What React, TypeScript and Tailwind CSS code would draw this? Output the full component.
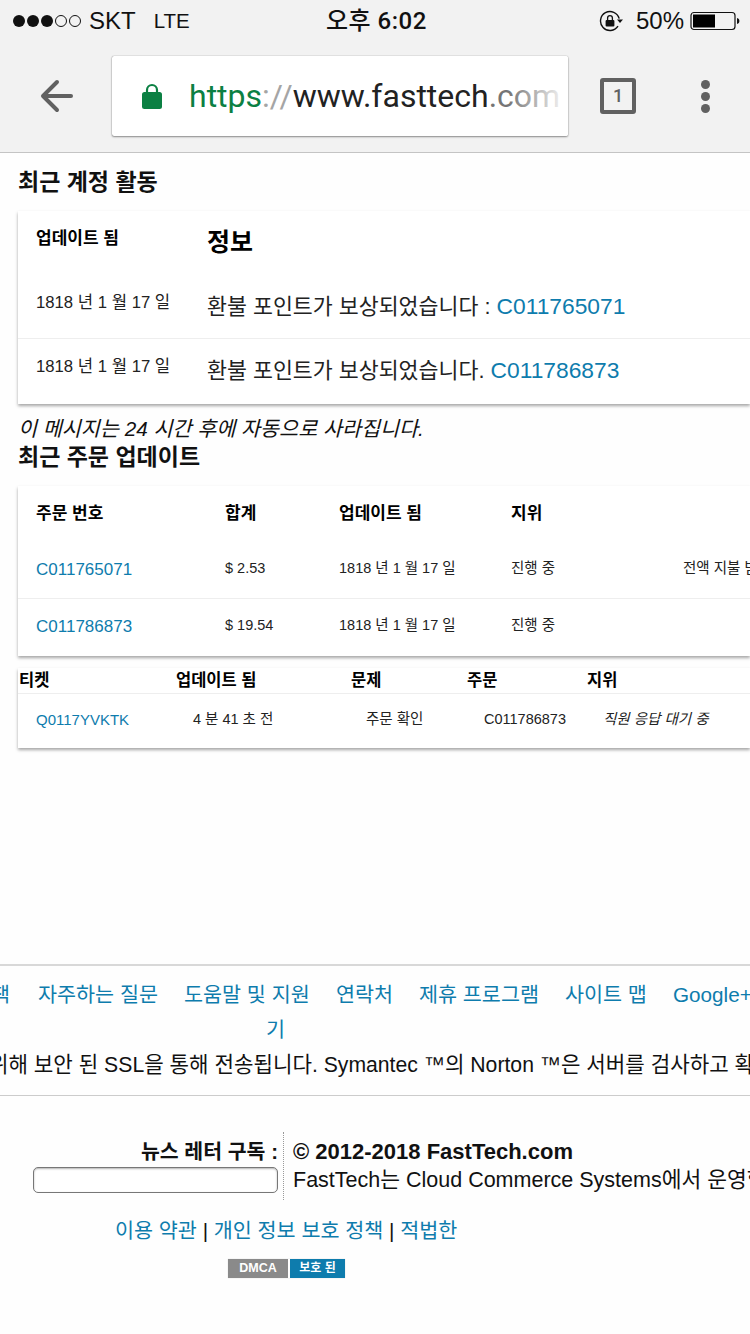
import React from 'react';

const KR = "font-['Liberation_Sans','Noto_Sans_CJK_KR',sans-serif]";
const link = 'text-[#0e7cad]';

function ArrowBack() {
  return (
    <svg width="34" height="34" viewBox="0 0 34 34" fill="none" stroke="#616161" strokeWidth="4" strokeLinecap="round" strokeLinejoin="round">
      <path d="M31 17H4" />
      <path d="M17 3 3 17l14 14" />
    </svg>
  );
}

function Lock() {
  return (
    <svg width="20" height="26" viewBox="0 0 20 26">
      <path d="M5 10V7a5 5 0 0 1 10 0v3" fill="none" stroke="#0b8043" strokeWidth="2.2" />
      <rect x="0" y="9" width="20" height="17" rx="2.5" fill="#0b8043" />
    </svg>
  );
}

function RotationLock() {
  return (
    <svg width="26" height="22" viewBox="0 0 26 22" fill="none">
      <path d="M20.2 8.6A9.5 9.5 0 1 0 19 16.2" stroke="#111" strokeWidth="1.4" />
      <path d="M18 9.5h6l-3 3.6z" fill="#111" />
      <rect x="6.6" y="10" width="8.8" height="6.5" rx="1" fill="#111" />
      <path d="M8.6 10V8a2.4 2.4 0 0 1 4.8 0v2" stroke="#111" strokeWidth="1.3" />
    </svg>
  );
}

function Battery() {
  return (
    <svg width="50" height="20" viewBox="0 0 50 20" fill="none">
      <rect x="1" y="1.5" width="44" height="17" rx="3" stroke="#111" strokeWidth="1.2" />
      <rect x="3" y="3.5" width="22" height="13" fill="#000" />
      <path d="M47 7c1.6.3 2.4 1.5 2.4 3s-.8 2.7-2.4 3z" fill="#111" />
    </svg>
  );
}

function StatusBar() {
  return (
    <div className="relative flex h-[42px] items-center justify-between pl-[13px] pr-[10px] text-[#111]">
      <div className="flex items-center text-[24px] leading-none">
        <div className="flex items-center gap-[2px]">
          {[0, 1, 2].map((i) => <span key={i} className="h-[12px] w-[12px] rounded-full bg-[#111]" />)}
          {[0, 1].map((i) => <span key={i} className="h-[12px] w-[12px] rounded-full border border-[#111]" />)}
        </div>
        <span className="ml-[8px]">SKT</span>
        <span className="ml-[18px] text-[20.5px]">LTE</span>
      </div>
      <div className="absolute left-[326px] top-[7px] font-['Roboto','Noto_Sans_CJK_KR',sans-serif] text-[24px] font-medium leading-[28px] tracking-[0.5px]">오후 6:02</div>
      <div className="flex items-center text-[24px] leading-none">
        <RotationLock />
        <span className="ml-[11px]">50%</span>
        <span className="ml-[6px]"><Battery /></span>
      </div>
    </div>
  );
}

function Toolbar() {
  return (
    <div className="flex h-[111px] items-start border-b border-[#c4c4c4]">
      <div className="ml-[40px] mt-[37px]"><ArrowBack /></div>
      <div className="relative ml-[38px] mt-[14px] flex h-[80px] w-[456px] items-center overflow-hidden rounded-[2px] bg-white pl-[30px] shadow-[0_1px_2px_rgba(0,0,0,0.4),0_0_1px_rgba(0,0,0,0.5)]">
        <Lock />
        <div className="ml-[27px] whitespace-nowrap font-['Roboto',sans-serif] text-[32px] leading-none text-[#222]">
          <span className="text-[#0b8043]">https</span>
          <span className="text-[#a5a5a5]">://</span>
          www.fasttech
          <span className="text-[#757575]">.com</span>
        </div>
        <div className="absolute right-0 top-0 h-full w-[60px] bg-gradient-to-r from-white/0 to-white" />
      </div>
      <div className="ml-[32px] mt-[36px] flex h-[36px] w-[36px] items-center justify-center rounded-[3px] border-[4px] border-[#616161] font-['Roboto',sans-serif] text-[18px] font-medium leading-none text-[#616161]">1</div>
      <div className="ml-[65px] mt-[38px] flex flex-col gap-[3px]">
        {[0, 1, 2].map((i) => <span key={i} className="h-[9px] w-[9px] rounded-full bg-[#616161]" />)}
      </div>
    </div>
  );
}

function Activity() {
  const rows = [
    ['환불 포인트가 보상되었습니다 : ', 'C011765071'],
    ['환불 포인트가 보상되었습니다. ', 'C011786873'],
  ];
  return (
    <section>
      <h2 className="ml-[18px] mt-[15px] text-[23px] font-bold leading-[28px] text-[#111]">최근 계정 활동</h2>
      <div className="ml-[18px] mt-[15px] h-[193px] bg-white shadow-[0_2px_3px_rgba(0,0,0,0.35)]">
        <div className="flex h-[67px]">
          <div className="ml-[18px] w-[171px] pt-[17px] text-[17px] font-bold leading-[22px]">업데이트 됨</div>
          <div className="pt-[16px] text-[25px] font-bold leading-[30px]">정보</div>
        </div>
        {rows.map(([text, id], i) => (
          <div key={id} className={i === 0 ? 'flex h-[60px] items-center' : 'flex h-[65px] items-center border-t border-[#eee]'}>
            <div className={i === 0 ? 'ml-[18px] w-[171px] pb-[10px] text-[16.7px] leading-[20px] text-[#222]' : 'ml-[18px] w-[171px] pb-[8px] text-[16.7px] leading-[20px] text-[#222]'}>1818 년 1 월 17 일</div>
            <div className={i === 0 ? 'whitespace-pre pb-[4px] text-[21.7px] leading-[28px] text-[#222]' : 'whitespace-pre pb-[2px] text-[21.7px] leading-[28px] text-[#222]'}>{text}<span className={`text-[22.8px] ${link}`}>{id}</span></div>
          </div>
        ))}
      </div>
    </section>
  );
}

function OrderRow({ id, total, note, border }: { id: string; total: string; note?: string; border?: boolean }) {
  return (
    <div className={border ? 'flex h-[57px] items-center whitespace-nowrap border-t border-[#eee]' : 'flex h-[56px] items-center whitespace-nowrap'}>
      <div className={`ml-[18px] w-[189px] shrink-0 text-[17px] ${link}`}>{id}</div>
      <div className="w-[114px] shrink-0 pb-[3px] text-[14.5px] text-[#222]">{total}</div>
      <div className="w-[172px] shrink-0 pb-[3px] text-[14.5px] text-[#222]">1818 년 1 월 17 일</div>
      <div className="w-[172px] shrink-0 pb-[3px] text-[14.5px] text-[#222]">진행 중</div>
      {note && <div className="shrink-0 pb-[3px] text-[14.5px] text-[#222]">{note}</div>}
    </div>
  );
}

function Orders() {
  return (
    <section>
      <h2 className="ml-[18px] mt-[1px] text-[23px] font-bold leading-[28px] text-[#111]">최근 주문 업데이트</h2>
      <div className="ml-[18px] mt-[15px] h-[170px] overflow-hidden bg-white shadow-[0_2px_3px_rgba(0,0,0,0.35)]">
        <div className="flex h-[56px] items-center text-[17px] font-bold">
          <div className="ml-[18px] w-[189px]">주문 번호</div>
          <div className="w-[114px]">합계</div>
          <div className="w-[172px]">업데이트 됨</div>
          <div>지위</div>
        </div>
        <OrderRow id="C011765071" total="$ 2.53" note="전액 지불 받음" />
        <OrderRow id="C011786873" total="$ 19.54" border />
      </div>
    </section>
  );
}

function Tickets() {
  return (
    <div className="ml-[18px] mt-[12px] h-[80px] overflow-hidden bg-white shadow-[0_2px_3px_rgba(0,0,0,0.35)]">
      <div className="flex h-[26px] items-center border-b border-[#eee] text-[16.5px] font-bold">
        <div className="ml-[1px] w-[157px]">티켓</div>
        <div className="w-[175px]">업데이트 됨</div>
        <div className="w-[116px]">문제</div>
        <div className="w-[120px]">주문</div>
        <div>지위</div>
      </div>
      <div className="flex h-[52px] items-center whitespace-nowrap text-[14.5px] text-[#222]">
        <div className={`ml-[18px] w-[157px] text-[15px] ${link}`}>Q0117YVKTK</div>
        <div className="w-[173px]">4 분 41 초 전</div>
        <div className="w-[118px]">주문 확인</div>
        <div className="w-[119px]">C011786873</div>
        <div className="italic">직원 응답 대기 중</div>
      </div>
    </div>
  );
}

function FooterLinks() {
  return (
    <div className="mt-[216px] border-t-2 border-[#d8d8d8]">
      <div className={`flex h-[85px] items-start whitespace-nowrap pt-[15px] text-[20.7px] leading-[28px] ${link}`}>
        <span className="ml-[-9px] w-[47px] shrink-0">책</span>
        <span className="w-[146px] shrink-0">자주하는 질문</span>
        <div className="flex w-[152px] shrink-0 flex-col">
          <span>도움말 및 지원</span>
          <span className="ml-[82px] mt-[7px]">기</span>
        </div>
        <span className="w-[83px] shrink-0">연락처</span>
        <span className="w-[146px] shrink-0">제휴 프로그램</span>
        <span className="w-[108px] shrink-0">사이트 맵</span>
        <span className="shrink-0">Google+</span>
      </div>
      <div className="ml-[-11px] h-[44px] whitespace-nowrap text-[21.2px] leading-[28px] text-[#111]">
        위해 보안 된 SSL을 통해 전송됩니다. Symantec ™의 Norton ™은 서버를 검사하고 확인합니다.
      </div>
    </div>
  );
}

function Newsletter() {
  return (
    <div className="border-t border-[#ccc]">
      <div className="mt-[36px] flex h-[68px]">
        <div className="ml-[33px] flex w-[246px] flex-col items-end">
          <div className="pt-[6px] text-[20.5px] font-bold leading-[28px] text-[#111]">뉴스 레터 구독 :</div>
          <input aria-label="뉴스 레터 구독" className="mt-[1px] h-[26px] w-[245px] rounded-[5px] border border-[#777] bg-white shadow-[inset_0_1px_2px_rgba(0,0,0,0.3)]" />
        </div>
        <div className="ml-[5px] whitespace-nowrap border-l border-dotted border-[#999] pl-[9px]">
          <div className="pt-[6px] text-[22px] font-bold leading-[28px] text-[#111]">© 2012-2018 FastTech.com</div>
          <div className="pt-[1px] text-[21.5px] leading-[27px] text-[#111]">FastTech는 Cloud Commerce Systems에서 운영합니다.</div>
        </div>
      </div>
      <div className="ml-[115px] mt-[17px] text-[20.7px] leading-[28px] text-[#111]">
        <span className={link}>이용 약관</span> | <span className={link}>개인 정보 보호 정책</span> | <span className={link}>적법한</span>
      </div>
      <div className="ml-[228px] mt-[14px] flex h-[19px] w-[117px] gap-[2px] text-[12.5px] font-bold leading-[19px] text-white shadow-[0_0_1px_rgba(0,0,0,0.2)]">
        <span className="w-[60px] bg-[#8a8a8a] text-center">DMCA</span>
        <span className="w-[55px] bg-[#0e7cad] text-center text-[12px]">보호 된</span>
      </div>
    </div>
  );
}

export default function App() {
  return (
    <div className={`h-[1334px] w-[750px] overflow-hidden bg-[#fefefe] ${KR}`}>
      <div className="bg-[#f2f2f2]">
        <StatusBar />
        <Toolbar />
      </div>
      <Activity />
      <p className="ml-[18px] mt-[12px] text-[20.7px] italic leading-[26px] text-[#111]">이 메시지는 24 시간 후에 자동으로 사라집니다.</p>
      <Orders />
      <Tickets />
      <FooterLinks />
      <Newsletter />
    </div>
  );
}
